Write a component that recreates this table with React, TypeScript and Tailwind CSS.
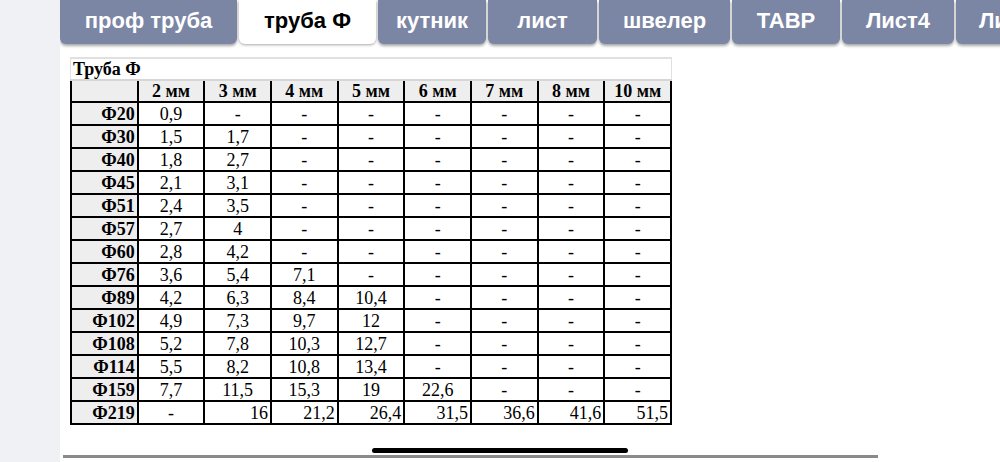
import React from "react";

const tabs: { label: string; w: number; active?: boolean }[] = [
  { label: "проф труба", w: 177 },
  { label: "труба Ф", w: 137, active: true },
  { label: "кутник", w: 108 },
  { label: "лист", w: 109 },
  { label: "швелер", w: 131 },
  { label: "ТАВР", w: 108 },
  { label: "Лист4", w: 112 },
  { label: "Лист5", w: 110 },
];

const headers = ["2 мм", "3 мм", "4 мм", "5 мм", "6 мм", "7 мм", "8 мм", "10 мм"];

const rows: [string, string[]][] = [
  ["Ф20", ["0,9", "-", "-", "-", "-", "-", "-", "-"]],
  ["Ф30", ["1,5", "1,7", "-", "-", "-", "-", "-", "-"]],
  ["Ф40", ["1,8", "2,7", "-", "-", "-", "-", "-", "-"]],
  ["Ф45", ["2,1", "3,1", "-", "-", "-", "-", "-", "-"]],
  ["Ф51", ["2,4", "3,5", "-", "-", "-", "-", "-", "-"]],
  ["Ф57", ["2,7", "4", "-", "-", "-", "-", "-", "-"]],
  ["Ф60", ["2,8", "4,2", "-", "-", "-", "-", "-", "-"]],
  ["Ф76", ["3,6", "5,4", "7,1", "-", "-", "-", "-", "-"]],
  ["Ф89", ["4,2", "6,3", "8,4", "10,4", "-", "-", "-", "-"]],
  ["Ф102", ["4,9", "7,3", "9,7", "12", "-", "-", "-", "-"]],
  ["Ф108", ["5,2", "7,8", "10,3", "12,7", "-", "-", "-", "-"]],
  ["Ф114", ["5,5", "8,2", "10,8", "13,4", "-", "-", "-", "-"]],
  ["Ф159", ["7,7", "11,5", "15,3", "19", "22,6", "-", "-", "-"]],
  ["Ф219", ["-", "16", "21,2", "26,4", "31,5", "36,6", "41,6", "51,5"]],
];

export default function App() {
  return (
    <div className="flex h-[462px] w-[1000px] overflow-hidden bg-white">
      <div className="w-[60px] shrink-0 bg-[#f0f1f4]" />
      <div className="flex min-w-0 flex-1 flex-col overflow-hidden">
        <div className="flex h-[44px] shrink-0 gap-[2px]">
          {tabs.map((t) => (
            <div
              key={t.label}
              style={{ width: t.w }}
              className={
                t.active
                  ? "flex h-[44px] shrink-0 items-center justify-center overflow-hidden rounded-b-[6px] bg-white pb-[4px] text-[22px] font-bold text-black shadow-[0_1px_3px_rgba(0,0,0,0.35)] [font-family:'Liberation_Sans',Arial,sans-serif]"
                  : "flex h-[44px] shrink-0 items-center justify-center overflow-hidden rounded-b-[6px] bg-[#7b86a5] pb-[4px] text-[22px] font-bold text-white shadow-[0_2px_3px_rgba(0,0,0,0.35)] [font-family:'Liberation_Sans',Arial,sans-serif]"
              }
            >
              <span className="whitespace-nowrap">{t.label}</span>
            </div>
          ))}
        </div>

        <div className="ml-[10px] mt-[13px] w-[602px] [font-family:'Liberation_Serif','Times_New_Roman',serif]">
          <div className="flex h-[22px] items-center border-x border-t-2 border-[#e0e0e0] pl-[2px] text-[18px] font-bold leading-none text-black">
            Труба Ф
          </div>
          <div className="grid grid-cols-9 gap-[2px] border-t-2 border-[#d6d6d6] bg-black px-[2px] pb-[2px]">
            <div className="h-[20px] bg-[#eeeeef]" />
            {headers.map((h) => (
              <div
                key={h}
                className="flex h-[20px] items-center justify-center bg-[#eeeeef] text-[18px] font-bold leading-none text-black"
              >
                {h}
              </div>
            ))}
            {rows.map(([name, vals], ri) => (
              <React.Fragment key={name}>
                <div className="flex h-[21px] items-center justify-end bg-[#eeeeef] pr-[2px] text-[18px] font-bold leading-none text-black">
                  {name}
                </div>
                {vals.map((v, ci) => {
                  const right = ri === rows.length - 1 && v !== "-";
                  return (
                    <div
                      key={ci}
                      className={
                        right
                          ? "flex h-[21px] items-center justify-end bg-white pr-[2px] text-[18px] leading-none text-black"
                          : "flex h-[21px] items-center justify-center bg-white text-[18px] leading-none text-black"
                      }
                    >
                      {v}
                    </div>
                  );
                })}
              </React.Fragment>
            ))}
          </div>
        </div>

        <div className="ml-[312px] mt-[23px] h-[5px] w-[256px] rounded-full bg-black" />
        <div className="ml-[3px] mt-[2px] h-[3px] w-[815px] bg-[#8a8a8a]" />
      </div>
    </div>
  );
}
